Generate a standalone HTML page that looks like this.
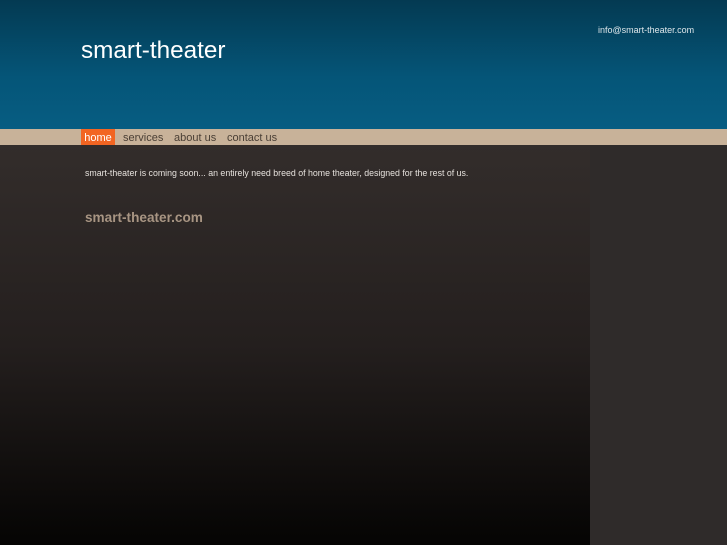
<!DOCTYPE html>
<html><head><style>
body{margin:0;width:727px;height:545px;overflow:hidden;font-family:"Liberation Sans",sans-serif;background:#2c2928;position:relative}
#hdr{position:absolute;left:0;top:0;width:727px;height:129px;background:linear-gradient(#043a52,#055578 60%,#065d82)}
#nav{position:absolute;left:0;top:129px;width:727px;height:16px;background:#c8b299}
#main{position:absolute;left:0;top:145px;width:590px;height:400px;background:linear-gradient(#332d2b,#241f1e 50%,#050403)}
#side{position:absolute;left:590px;top:145px;width:137px;height:400px;background:#2f2b2a}
.t{position:absolute;white-space:nowrap}
.n{position:absolute;top:129px;height:16px;line-height:18px;font-size:11px;color:#4a3f35}
</style></head><body>
<div id="hdr"></div><div id="nav"></div><div id="main"></div><div id="side"></div>
<div class="t" style="left:81px;top:37px;font-size:24.3px;color:#fff">smart-theater</div>
<div class="t" style="left:598px;top:25px;font-size:9px;color:#dde6ea">info@smart-theater.com</div>
<div class="n" style="left:81px;width:34px;background:#f26522;color:#fff;text-align:center">home</div>
<div class="n" style="left:123px">services</div>
<div class="n" style="left:174px">about us</div>
<div class="n" style="left:227px">contact us</div>
<div class="t" style="left:85px;top:168px;font-size:8.8px;color:#e6e2dd">smart-theater is coming soon... an entirely need breed of home theater, designed for the rest of us.</div>
<div class="t" style="left:85px;top:210px;font-size:13.6px;font-weight:bold;color:#a89583">smart-theater.com</div>
</body></html>
